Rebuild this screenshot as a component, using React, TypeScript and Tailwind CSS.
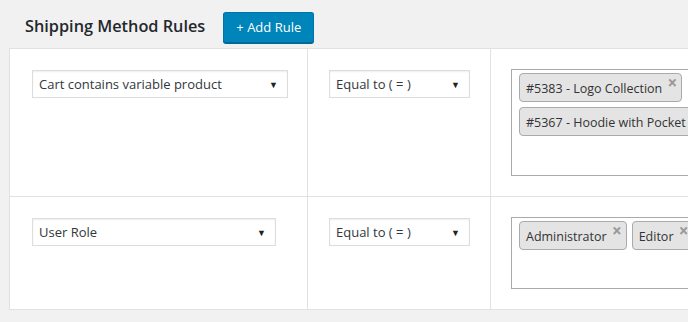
import React from 'react';

const font = { fontFamily: '"Open Sans", "Noto Sans", sans-serif' };

const Select: React.FC<{ label: string; width: string }> = ({ label, width }) => (
  <div
    className={`flex h-[28px] items-center justify-between border border-[#ddd] bg-white pl-[6px] pr-[9px] pt-[2px] text-[13px] text-[#32373c] shadow-[inset_0_1px_2px_rgba(0,0,0,0.07)] ${width}`}
  >
    <span>{label}</span>
    <span className="text-[9px] text-[#222]">▼</span>
  </div>
);

const Tag: React.FC<{ label: string }> = ({ label }) => (
  <div className="relative flex h-[29px] shrink-0 items-center whitespace-nowrap rounded-[4px] border border-[#aaa] bg-[#e4e4e4] pl-[6px] pr-[19px] pt-[3px] text-[12.5px] text-[#333]">
    {label}
    <span className="absolute right-[4px] top-[-1px] text-[17px] font-bold leading-[20px] text-[#999]">×</span>
  </div>
);

const RuleRow: React.FC<{
  field: string;
  fieldWidth: string;
  tags: string[];
  stacked?: boolean;
  boxHeight: string;
  rowHeight: string;
  last?: boolean;
}> = ({ field, fieldWidth, tags, stacked, boxHeight, rowHeight, last }) => (
  <div className={`flex ${rowHeight} ${last ? '' : 'border-b border-[#e1e1e1]'}`}>
    <div className="w-[298px] shrink-0 border-r border-[#e1e1e1] pl-[22px] pt-[21px]">
      <Select label={field} width={fieldWidth} />
    </div>
    <div className="w-[183px] shrink-0 border-r border-[#e1e1e1] pl-[21px] pt-[21px]">
      <Select label="Equal to ( = )" width="w-[141px]" />
    </div>
    <div className="flex-1 overflow-hidden pl-[20px] pt-[20px]">
      <div className={`w-[300px] border border-[#aaa] bg-white pl-[7px] pt-[3px] ${boxHeight}`}>
        <div className={stacked ? 'flex flex-col items-start gap-[5px]' : 'flex gap-[5px]'}>
          {tags.map((t) => (
            <Tag key={t} label={t} />
          ))}
        </div>
      </div>
    </div>
  </div>
);

export default function App() {
  return (
    <div className="h-[322px] w-[688px] overflow-hidden bg-[#f1f1f1]" style={font}>
      <div className="flex h-[48px] items-start pl-[25px] pt-[12px]">
        <h2 className="mr-[18px] pt-[1px] text-[16.3px] font-semibold leading-[26px] text-[#23282d]">
          Shipping Method Rules
        </h2>
        <button className="h-[31px] w-[91px] rounded-[3px] border border-[#0073aa] border-b-[#006799] bg-[#0085ba] pt-[1px] text-[13px] text-white shadow-[0_1px_0_#006799]">
          + Add Rule
        </button>
      </div>
      <div className="ml-[9px] border-l border-t border-b border-[#e1e1e1] bg-white">
        <RuleRow
          field="Cart contains variable product"
          fieldWidth="w-[256px]"
          tags={['#5383 - Logo Collection', '#5367 - Hoodie with Pocket']}
          stacked
          boxHeight="h-[107px]"
          rowHeight="h-[148px]"
        />
        <RuleRow
          field="User Role"
          fieldWidth="w-[244px]"
          tags={['Administrator', 'Editor']}
          boxHeight="h-[72px]"
          rowHeight="h-[112px]"
          last
        />
      </div>
    </div>
  );
}
